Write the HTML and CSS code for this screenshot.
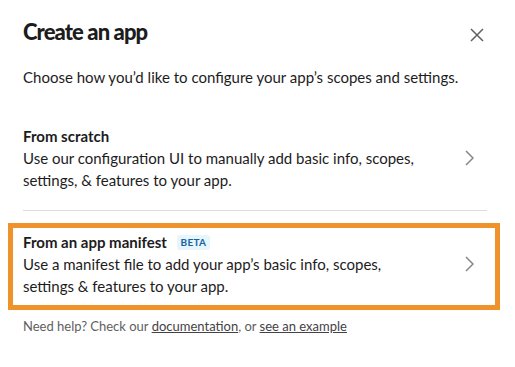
FILE: index.html
```html
<!DOCTYPE html>
<html lang="en">
<head>
    <meta charset="UTF-8">
    <meta name="viewport" content="width=device-width, initial-scale=1.0">
    <title>Create an app</title>
    <link rel="stylesheet" href="styles.css">
</head>
<body>
<div class="modal">
    <div class="modal-header">
        <h1>Create an app</h1>
        <button class="close" aria-label="Close">
            <svg width="14" height="14" viewBox="0 0 14 14"><path d="M1 1L13 13M13 1L1 13" stroke="#616061" stroke-width="1.5" fill="none"/></svg>
        </button>
    </div>
    <p class="intro">Choose how you’d like to configure your app’s scopes and settings.</p>

    <div class="option">
        <div class="option-text">
            <div class="option-title">From scratch</div>
            <div class="option-desc">Use our configuration UI to manually add basic info, scopes, settings, &amp; features to your app.</div>
        </div>
        <svg class="chevron" width="9" height="16" viewBox="0 0 9 16"><path d="M1 1L8 8L1 15" stroke="#868686" stroke-width="1.5" fill="none"/></svg>
    </div>

    <hr class="divider">

    <div class="option selected">
        <div class="option-text">
            <div class="option-title">From an app manifest <span class="badge">BETA</span></div>
            <div class="option-desc">Use a manifest file to add your app’s basic info, scopes, settings &amp; features to your app.</div>
        </div>
        <svg class="chevron" width="9" height="16" viewBox="0 0 9 16"><path d="M1 1L8 8L1 15" stroke="#868686" stroke-width="1.5" fill="none"/></svg>
    </div>

    <p class="help">Need help? Check our <a href="#">documentation</a>, or <a href="#">see an example</a></p>
</div>
</body>
</html>
```

FILE: styles.css
```css
body {
    margin: 0;
    background-color: #fff;
    font-family: Lato, "Open Sans", sans-serif;
    color: #1d1c1d;
}

.modal {
    padding: 18px 28px 0 23px;
}

.modal-header {
    display: flex;
    justify-content: space-between;
    align-items: flex-start;
}

.modal-header h1 {
    margin: 0;
    font-size: 22px;
    line-height: 28px;
    font-weight: 900;
    letter-spacing: -0.9px;
}

.close {
    margin-top: 10px;
    margin-right: 3px;
    padding: 0;
    border: none;
    background: none;
    width: 14px;
    height: 14px;
    cursor: pointer;
}

.close svg {
    display: block;
}

.intro {
    margin: 20px 0 0;
    font-size: 15px;
    line-height: 22px;
}

.option {
    display: flex;
    align-items: center;
    justify-content: space-between;
    margin: 29px -13px 0 -15px;
    padding: 3px 10px 8px;
    border: 5px solid transparent;
    cursor: pointer;
}

.option.selected {
    margin-top: 12px;
    border-color: #ef922b;
}

.option-text {
    max-width: 400px;
    font-size: 15px;
    line-height: 22px;
}

.option-title {
    font-weight: 700;
}

.badge {
    display: inline-block;
    margin-left: 6px;
    padding: 0 4px;
    height: 15px;
    line-height: 15px;
    vertical-align: 2px;
    border-radius: 3px;
    background-color: #e8f5fa;
    color: #1264a3;
    font-size: 10px;
    font-weight: 700;
    letter-spacing: 0.3px;
}

.chevron {
    margin-right: 11px;
}

.divider {
    margin: 6px 0 0;
    border: none;
    border-top: 1px solid #dddddd;
}

.help {
    margin: 7px 0 0;
    font-size: 13px;
    line-height: 18px;
    color: #616061;
}

.help a {
    color: #454245;
    text-decoration: underline;
}
```
